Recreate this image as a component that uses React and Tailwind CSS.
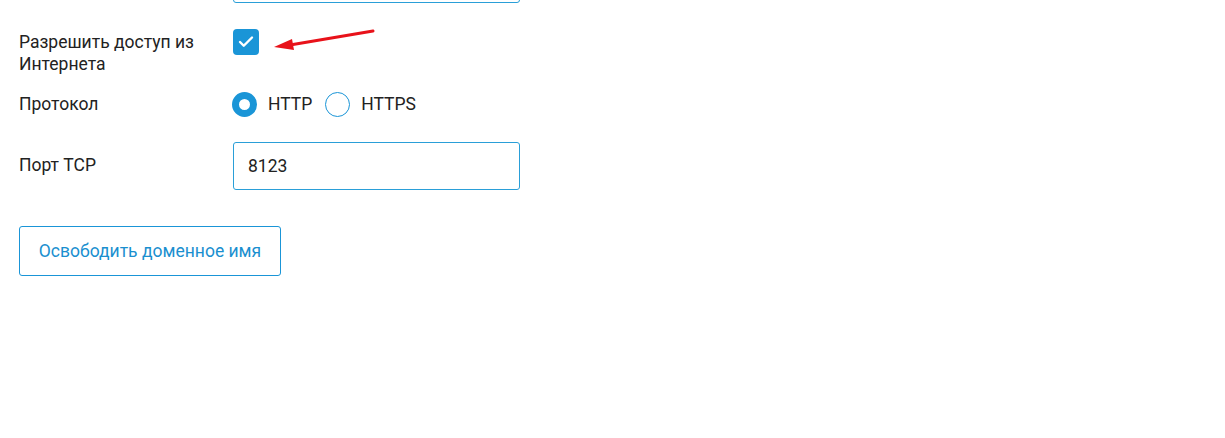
import { Check } from "lucide-react";

const Radio = ({ checked, label }) => (
  <label className="flex items-center gap-[11px]">
    <span
      className={
        checked
          ? "w-[25px] h-[25px] rounded-full border-[7px] border-[#1a95d7] bg-white"
          : "w-[25px] h-[25px] rounded-full border border-[#1a95d7] bg-white"
      }
    />
    <span className="text-[17.5px] text-[#222]">{label}</span>
  </label>
);

export default function App() {
  return (
    <div
      className="relative w-[1225px] h-[438px] overflow-hidden bg-white text-[17.5px] text-[#222]"
      style={{ fontFamily: "Roboto, 'Liberation Sans', sans-serif" }}
    >
      <div className="pl-[19px] flex flex-col">
        {/* верхнее поле, видна только нижняя граница */}
        <div className="flex mt-[-45px]">
          <div className="w-[214px]" />
          <div className="w-[287px] h-[48px] border border-[#2a9fd8] rounded-[3px]" />
        </div>

        <div className="flex items-start mt-[26px]">
          <div className="w-[214px] pt-[2px] leading-[22px]">
            Разрешить доступ из
            <br />
            Интернета
          </div>
          <div className="w-[26px] h-[26px] rounded-[4px] bg-[#1a95d7] flex items-center justify-center">
            <Check className="w-[18px] h-[18px] text-white" strokeWidth={3.2} />
          </div>
        </div>

        <div className="flex items-center mt-[16px]">
          <div className="w-[213px] leading-[22px]">Протокол</div>
          <div className="flex items-center gap-[13px]">
            <Radio checked label="HTTP" />
            <Radio label="HTTPS" />
          </div>
        </div>

        <div className="flex items-center mt-[25px]">
          <div className="w-[214px] leading-[22px] pb-[2px]">Порт TCP</div>
          <div className="w-[287px] h-[48px] border border-[#2a9fd8] rounded-[3px] px-[14px] flex items-center">
            8123
          </div>
        </div>

        <div className="mt-[36px]">
          <button className="h-[50px] w-[262px] border border-[#1a95d7] rounded-[3px] text-[#1a8fcf] text-[17.5px] bg-white">
            Освободить доменное имя
          </button>
        </div>
      </div>

      <svg
        className="absolute left-[270px] top-[26px]"
        width="110"
        height="28"
        viewBox="0 0 110 28"
      >
        <line x1="103" y1="5" x2="20" y2="19" stroke="#e8121a" strokeWidth="3" strokeLinecap="round" />
        <polygon points="4,21 22,13 24,24" fill="#e8121a" />
      </svg>
    </div>
  );
}
